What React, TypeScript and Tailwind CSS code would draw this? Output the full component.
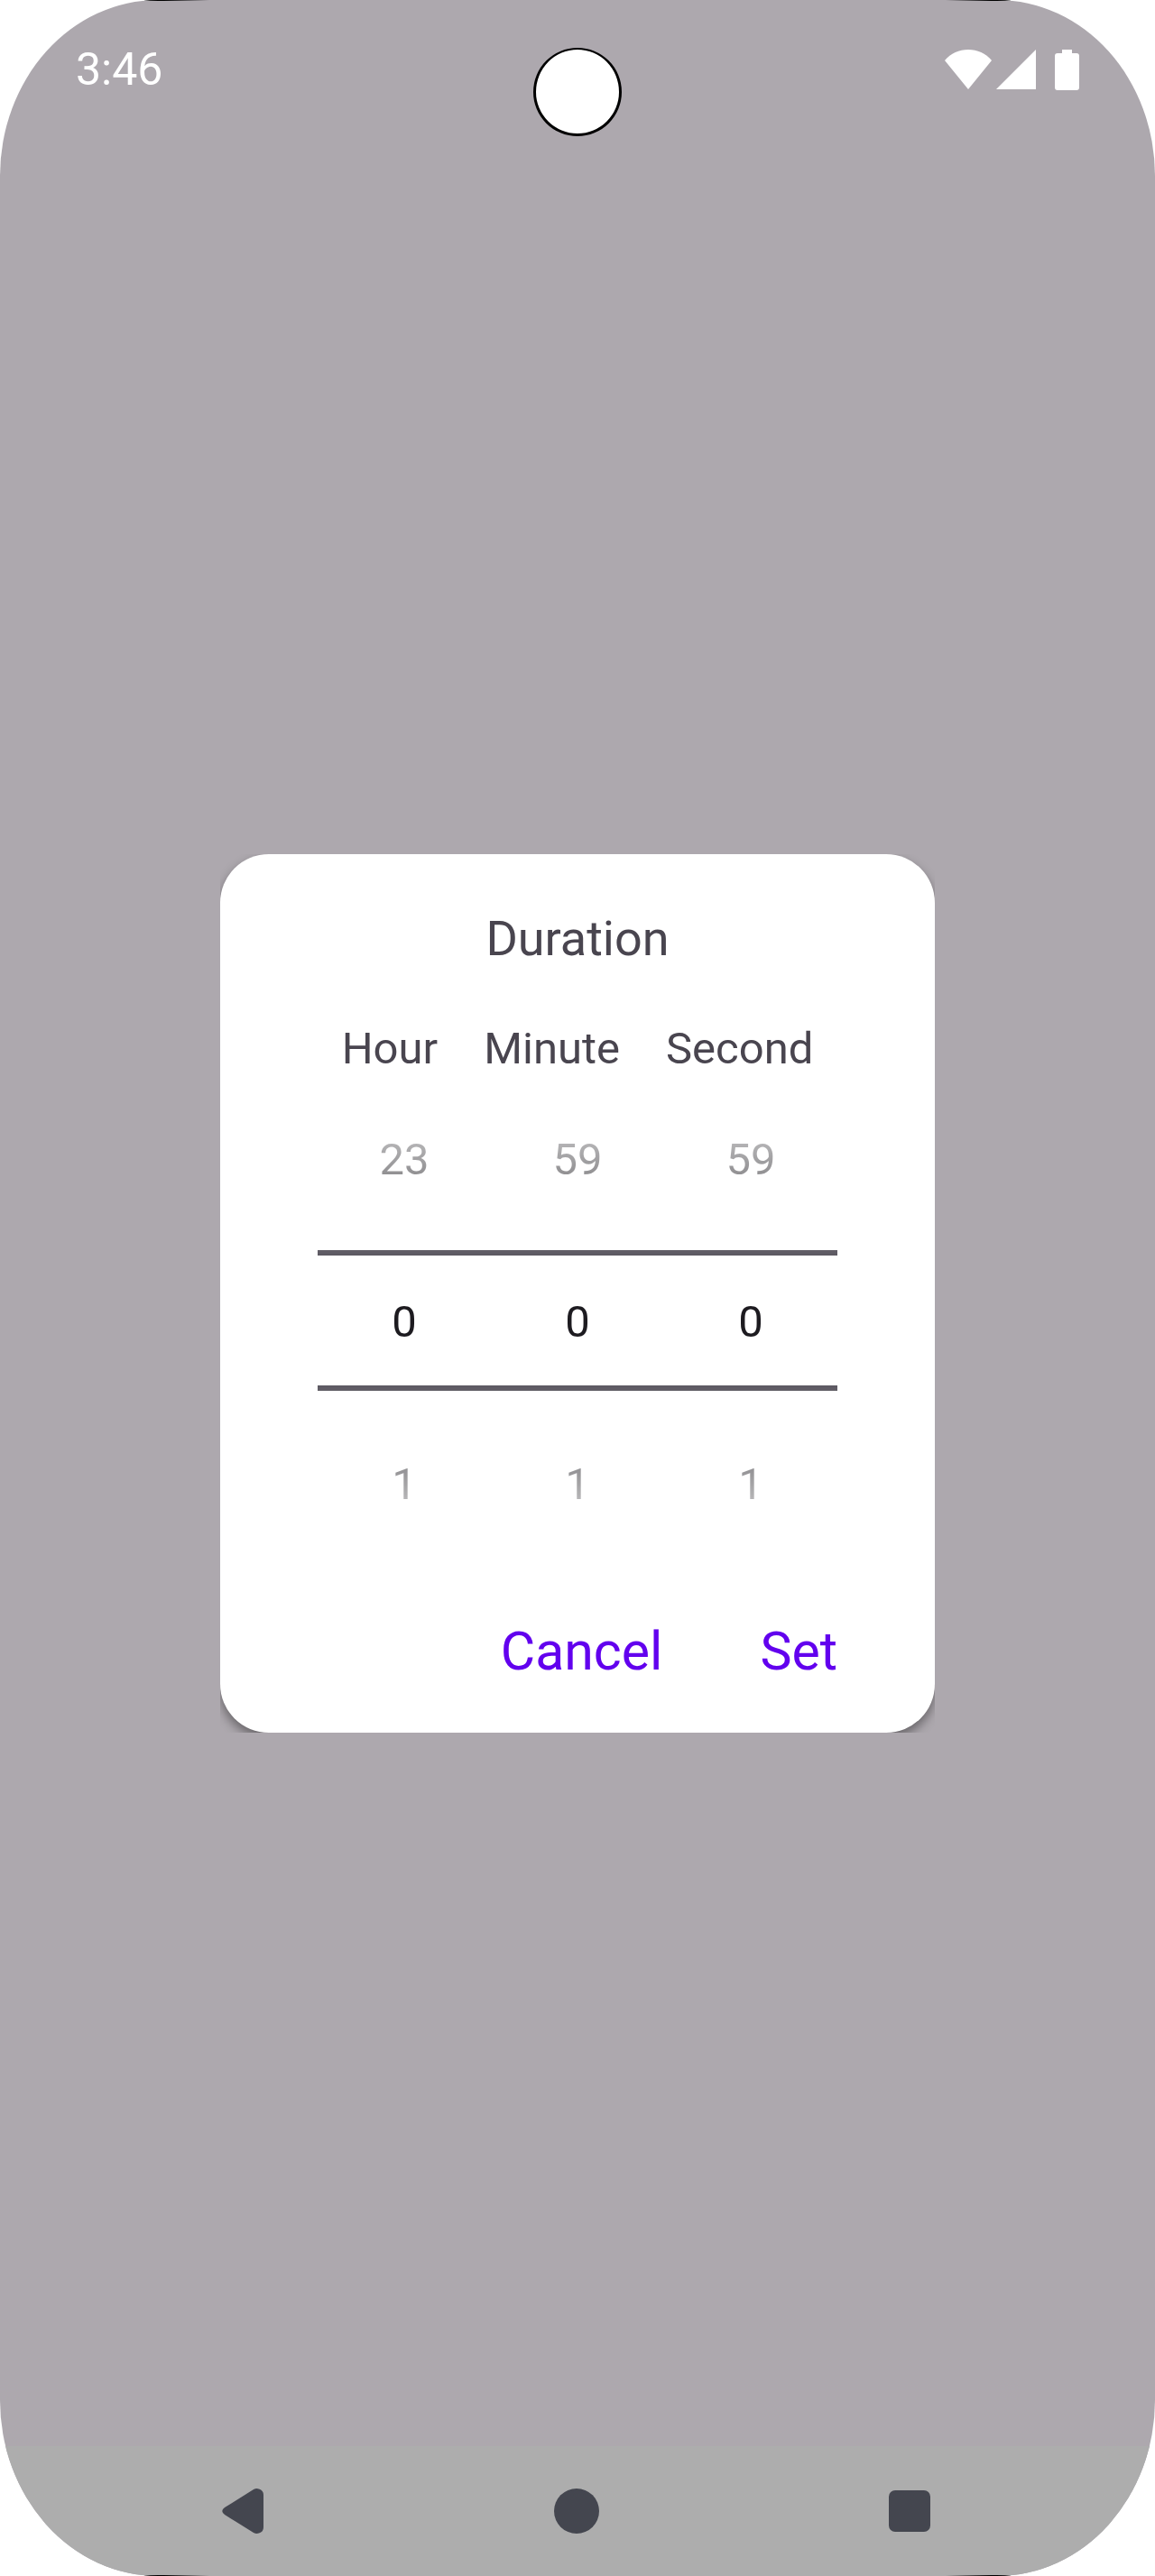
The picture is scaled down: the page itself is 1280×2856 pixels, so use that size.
import { useState } from "react";

function WifiIcon() {
  return (
    <svg width="52" height="44" viewBox="0 0 52 44" fill="white" aria-hidden="true">
      <path d="M26 0C36 0 45.500 4 52 12L26 44L0 12C6.500 4 16 0 26 0Z" />
    </svg>
  );
}

function SignalIcon() {
  return (
    <svg width="44" height="44" viewBox="0 0 44 44" fill="white" aria-hidden="true">
      <path d="M44 0V44H0Z" />
    </svg>
  );
}

function BatteryIcon() {
  return (
    <svg width="27" height="45" viewBox="0 0 27 45" fill="white" aria-hidden="true">
      <path d="M8 0H19V4H24Q27 4 27 7V42Q27 45 24 45H3Q0 45 0 42V7Q0 4 3 4H8Z" />
    </svg>
  );
}

function StatusBar() {
  return (
    <header className="relative flex h-[156px] items-center justify-between px-[84px] pb-[2px] text-white">
      <time className="text-[50px] leading-[56px]">3:46</time>
      <div className="absolute top-[53px] left-1/2 size-[98px] -translate-x-1/2 rounded-full border-[3px] border-t-2 border-black bg-white" />
      <div className="flex items-center">
        <WifiIcon />
        <span className="ml-[5px]">
          <SignalIcon />
        </span>
        <span className="ml-[21px]">
          <BatteryIcon />
        </span>
      </div>
    </header>
  );
}

type WheelProps = {
  label: string;
  count: number;
  value: number;
  onChange: (value: number) => void;
};

function Wheel({ label, count, value, onChange }: WheelProps) {
  const previous = (value + count - 1) % count;
  const next = (value + 1) % count;
  return (
    <div role="group" aria-label={label} className="flex flex-col text-[49px] leading-[56px] text-[#1d1b20]">
      <button type="button" onClick={() => onChange(previous)} className="h-[192px] pb-[8px]">
        {previous}
      </button>
      <output className="flex h-[156px] items-center justify-center border-y-[6px] border-[#49454f] pt-[4px]">
        {value}
      </output>
      <button type="button" onClick={() => onChange(next)} className="h-[192px] pt-[16px]">
        {next}
      </button>
    </div>
  );
}

function DurationDialog() {
  const [time, setTime] = useState({ hour: 0, minute: 0, second: 0 });
  return (
    <div className="w-full max-w-[792px] overflow-hidden">
      <section
        role="dialog"
        aria-labelledby="duration-title"
        className="flex flex-col rounded-[54px] bg-white px-[108px] pt-[60px] pb-[54px] text-[#49454f] shadow-[0_6px_12px_rgba(0,0,0,0.4)]"
      >
        <h1 id="duration-title" className="text-center text-[54px] leading-[68px]">
          Duration
        </h1>
        <div className="mt-[60px] flex justify-center gap-[51px] text-[49px] leading-[56px]">
          <span>Hour</span>
          <span>Minute</span>
          <span>Second</span>
        </div>
        <div className="mt-[3px] grid grid-cols-3 [mask-image:linear-gradient(to_bottom,transparent,black_222px,black_318px,transparent)]">
          <Wheel label="Hour" count={24} value={time.hour} onChange={(hour) => setTime({ ...time, hour })} />
          <Wheel label="Minute" count={60} value={time.minute} onChange={(minute) => setTime({ ...time, minute })} />
          <Wheel label="Second" count={60} value={time.second} onChange={(second) => setTime({ ...time, second })} />
        </div>
        <div className="mt-[61px] flex justify-end gap-[108px] text-[59px] leading-[72px] text-[#6200ee]">
          <button type="button">Cancel</button>
          <button type="button">Set</button>
        </div>
      </section>
    </div>
  );
}

function NavigationBar() {
  return (
    <nav className="grid h-[144px] grid-cols-3 place-items-center bg-[#adadad] pr-[87px] pl-[85px]">
      <button type="button" aria-label="Back">
        <svg width="50" height="50" viewBox="0 0 50 50" fill="#44464f" aria-hidden="true">
          <path d="M4 21L36 1Q39 -0.500 42 0.500Q47 2 47 7V43Q47 48 42 49.500Q39 50.500 36 49L4 29Q-1.500 25 4 21Z" />
        </svg>
      </button>
      <button type="button" aria-label="Home">
        <svg width="50" height="50" viewBox="0 0 50 50" fill="#44464f" aria-hidden="true">
          <circle cx="25" cy="25" r="25" />
        </svg>
      </button>
      <button type="button" aria-label="Recent apps">
        <svg width="46" height="46" viewBox="0 0 46 46" fill="#44464f" aria-hidden="true">
          <rect width="46" height="46" rx="7" />
        </svg>
      </button>
    </nav>
  );
}

export default function App() {
  return (
    <div className="min-h-screen bg-white font-[Roboto,sans-serif]">
      <div className="relative flex min-h-screen flex-col overflow-hidden rounded-[175px_/_195px] bg-[#ada8ae]">
        <StatusBar />
        <main className="flex flex-1 items-center justify-center">
          <DurationDialog />
        </main>
        <NavigationBar />
        <div className="absolute top-0 left-[160px] h-px w-[72px] bg-linear-to-r from-black from-30% to-transparent" />
        <div className="absolute top-0 right-[160px] h-px w-[72px] bg-linear-to-l from-black from-30% to-transparent" />
        <div className="absolute bottom-0 left-[160px] h-px w-[72px] bg-linear-to-r from-black from-30% to-transparent" />
        <div className="absolute right-[160px] bottom-0 h-px w-[72px] bg-linear-to-l from-black from-30% to-transparent" />
      </div>
    </div>
  );
}
